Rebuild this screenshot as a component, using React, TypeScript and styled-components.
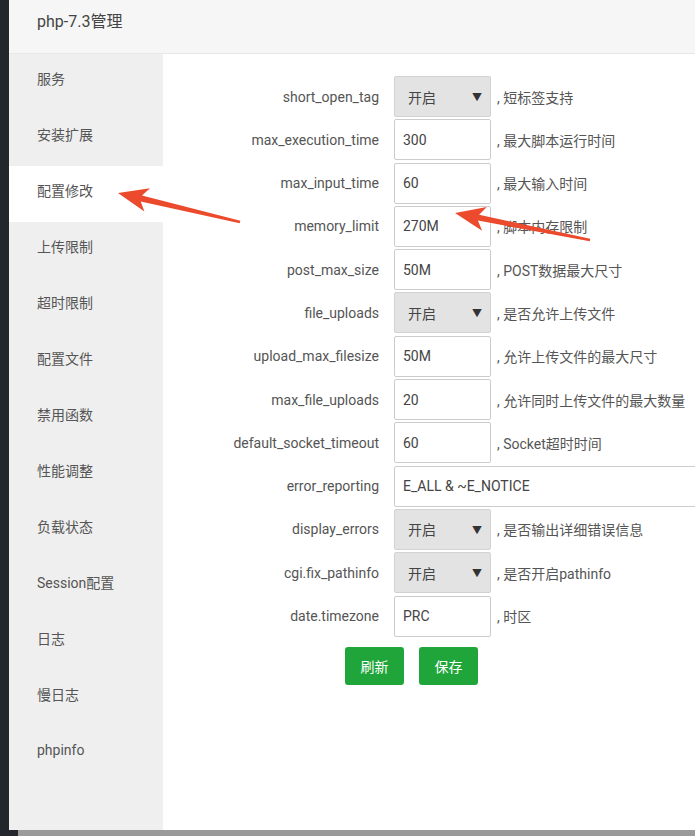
import React from 'react';
import styled, { createGlobalStyle } from 'styled-components';

type Field = {
  name: string;
  value: string;
  kind: 'select' | 'input' | 'wide';
  desc?: string;
};

const fields: Field[] = [
  { name: 'short_open_tag', value: '开启', kind: 'select', desc: '短标签支持' },
  { name: 'max_execution_time', value: '300', kind: 'input', desc: '最大脚本运行时间' },
  { name: 'max_input_time', value: '60', kind: 'input', desc: '最大输入时间' },
  { name: 'memory_limit', value: '270M', kind: 'input', desc: '脚本内存限制' },
  { name: 'post_max_size', value: '50M', kind: 'input', desc: 'POST数据最大尺寸' },
  { name: 'file_uploads', value: '开启', kind: 'select', desc: '是否允许上传文件' },
  { name: 'upload_max_filesize', value: '50M', kind: 'input', desc: '允许上传文件的最大尺寸' },
  { name: 'max_file_uploads', value: '20', kind: 'input', desc: '允许同时上传文件的最大数量' },
  { name: 'default_socket_timeout', value: '60', kind: 'input', desc: 'Socket超时时间' },
  { name: 'error_reporting', value: 'E_ALL & ~E_NOTICE', kind: 'wide' },
  { name: 'display_errors', value: '开启', kind: 'select', desc: '是否输出详细错误信息' },
  { name: 'cgi.fix_pathinfo', value: '开启', kind: 'select', desc: '是否开启pathinfo' },
  { name: 'date.timezone', value: 'PRC', kind: 'input', desc: '时区' },
];

const menu = [
  '服务',
  '安装扩展',
  '配置修改',
  '上传限制',
  '超时限制',
  '配置文件',
  '禁用函数',
  '性能调整',
  '负载状态',
  'Session配置',
  '日志',
  '慢日志',
  'phpinfo',
];

type Pt = [number, number];

// polygon for a hand-drawn style annotation arrow
const arrowPoints = (tail: Pt, tip: Pt) => {
  const dx = tip[0] - tail[0];
  const dy = tip[1] - tail[1];
  const len = Math.hypot(dx, dy);
  const ux = dx / len;
  const uy = dy / len;
  const nx = -uy;
  const ny = ux;
  const headLen = 30;
  const headW = 12;
  const base: Pt = [tip[0] - ux * headLen, tip[1] - uy * headLen];
  const neck: Pt = [tip[0] - ux * (headLen - 6), tip[1] - uy * (headLen - 6)];
  const p = (x: number, y: number) => `${x.toFixed(1)},${y.toFixed(1)}`;
  return [
    p(tail[0] + nx * 1.2, tail[1] + ny * 1.2),
    p(neck[0] + nx * 3, neck[1] + ny * 3),
    p(base[0] + nx * headW, base[1] + ny * headW),
    p(tip[0], tip[1]),
    p(base[0] - nx * headW, base[1] - ny * headW),
    p(neck[0] - nx * 3, neck[1] - ny * 3),
    p(tail[0] - nx * 1.2, tail[1] - ny * 1.2),
  ].join(' ');
};

const App = () => {
  return (
    <>
      <GlobalStyle />
      <Screen>
        <Frame>
          <DarkStrip />
          <Panel>
            <TitleBar>php-7.3管理</TitleBar>
            <Body>
              <Sidebar>
                {menu.map((item) => (
                  <MenuItem key={item} $active={item === '配置修改'}>
                    {item}
                  </MenuItem>
                ))}
              </Sidebar>
              <Content>
                {fields.map((f) => (
                  <Row key={f.name}>
                    <Label>{f.name}</Label>
                    {f.kind === 'select' ? (
                      <SelectBox>
                        <span>{f.value}</span>
                        <Caret>▼</Caret>
                      </SelectBox>
                    ) : (
                      <InputBox $wide={f.kind === 'wide'}>{f.value}</InputBox>
                    )}
                    {f.desc && <Desc>, {f.desc}</Desc>}
                  </Row>
                ))}
                <ButtonRow>
                  <GreenButton>刷新</GreenButton>
                  <GreenButton>保存</GreenButton>
                </ButtonRow>
              </Content>
            </Body>
          </Panel>
        </Frame>
        <BottomBar>
          <BottomDark />
        </BottomBar>
        <Overlay width="695" height="836" viewBox="0 0 695 836">
          <polygon points={arrowPoints([240, 222], [118, 193])} fill="#ec4a2c" />
          <polygon points={arrowPoints([590, 240], [455, 213])} fill="#ec4a2c" />
        </Overlay>
      </Screen>
    </>
  );
};

export default App;

const GlobalStyle = createGlobalStyle`
  html, body {
    margin: 0;
    padding: 0;
    background: #fff;
  }
  body {
    font-family: Roboto, "Noto Sans CJK SC", sans-serif;
    color: #555;
  }
`;

const Screen = styled.div`
  position: relative;
  width: 695px;
  height: 836px;
  overflow: hidden;
`;

const Frame = styled.div`
  display: flex;
  height: 830px;
`;

const DarkStrip = styled.div`
  width: 9px;
  flex-shrink: 0;
  background: #23272c;
`;

const Panel = styled.div`
  flex: 1;
  min-width: 0;
  display: flex;
  flex-direction: column;
  background: #fff;
`;

const TitleBar = styled.div`
  height: 54px;
  box-sizing: border-box;
  padding: 12px 0 0 28px;
  background: #f6f6f6;
  border-bottom: 1px solid #e8e8e8;
  font-size: 16px;
  line-height: 19px;
  color: #444;
`;

const Body = styled.div`
  flex: 1;
  display: flex;
  min-width: 0;
`;

const Sidebar = styled.div`
  width: 154px;
  flex-shrink: 0;
  background: #efefef;
`;

const MenuItem = styled.div<{ $active?: boolean }>`
  height: 56px;
  box-sizing: border-box;
  padding: 0 0 9px 28px;
  display: flex;
  align-items: center;
  font-size: 14px;
  color: #555;
  background: ${(p) => (p.$active ? '#fff' : 'transparent')};
`;

const Content = styled.div`
  flex: 1;
  min-width: 0;
  overflow: hidden;
  padding-top: 22px;
  display: flex;
  flex-direction: column;
  gap: 2.3px;
`;

const Row = styled.div`
  display: flex;
  align-items: center;
  height: 41px;
`;

const Label = styled.div`
  width: 231px;
  flex-shrink: 0;
  box-sizing: border-box;
  padding-right: 15px;
  text-align: right;
  font-size: 14px;
  color: #555;
  white-space: nowrap;
`;

const InputBox = styled.div<{ $wide?: boolean }>`
  width: ${(p) => (p.$wide ? '320px' : '97px')};
  height: 41px;
  box-sizing: border-box;
  border: 1px solid #ccc;
  border-radius: 2px;
  padding-left: 8px;
  display: flex;
  align-items: center;
  font-size: 14px;
  color: #444;
  background: #fff;
  flex-shrink: 0;
`;

const SelectBox = styled.div`
  width: 97px;
  height: 41px;
  box-sizing: border-box;
  border: 1px solid #d2d2d2;
  border-radius: 2px;
  padding: 0 8px 0 13px;
  display: flex;
  align-items: center;
  justify-content: space-between;
  font-size: 14px;
  color: #444;
  background: #e3e3e3;
  flex-shrink: 0;
`;

const Caret = styled.span`
  font-size: 10px;
  color: #333;
`;

const Desc = styled.div`
  margin-left: 6px;
  font-size: 14px;
  color: #555;
  white-space: nowrap;
`;

const ButtonRow = styled.div`
  display: flex;
  gap: 15px;
  padding-left: 182px;
  margin-top: 8px;
`;

const GreenButton = styled.button`
  width: 59px;
  height: 38px;
  border: none;
  border-radius: 3px;
  background: #20a53a;
  color: #fff;
  font-family: Roboto, "Noto Sans CJK SC", sans-serif;
  font-size: 14px;
  padding: 0;
`;

const BottomBar = styled.div`
  height: 6px;
  background: #9a9a9a;
  display: flex;
`;

const BottomDark = styled.div`
  width: 18px;
  background: #23272c;
`;

const Overlay = styled.svg`
  position: absolute;
  left: 0;
  top: 0;
  pointer-events: none;
`;
